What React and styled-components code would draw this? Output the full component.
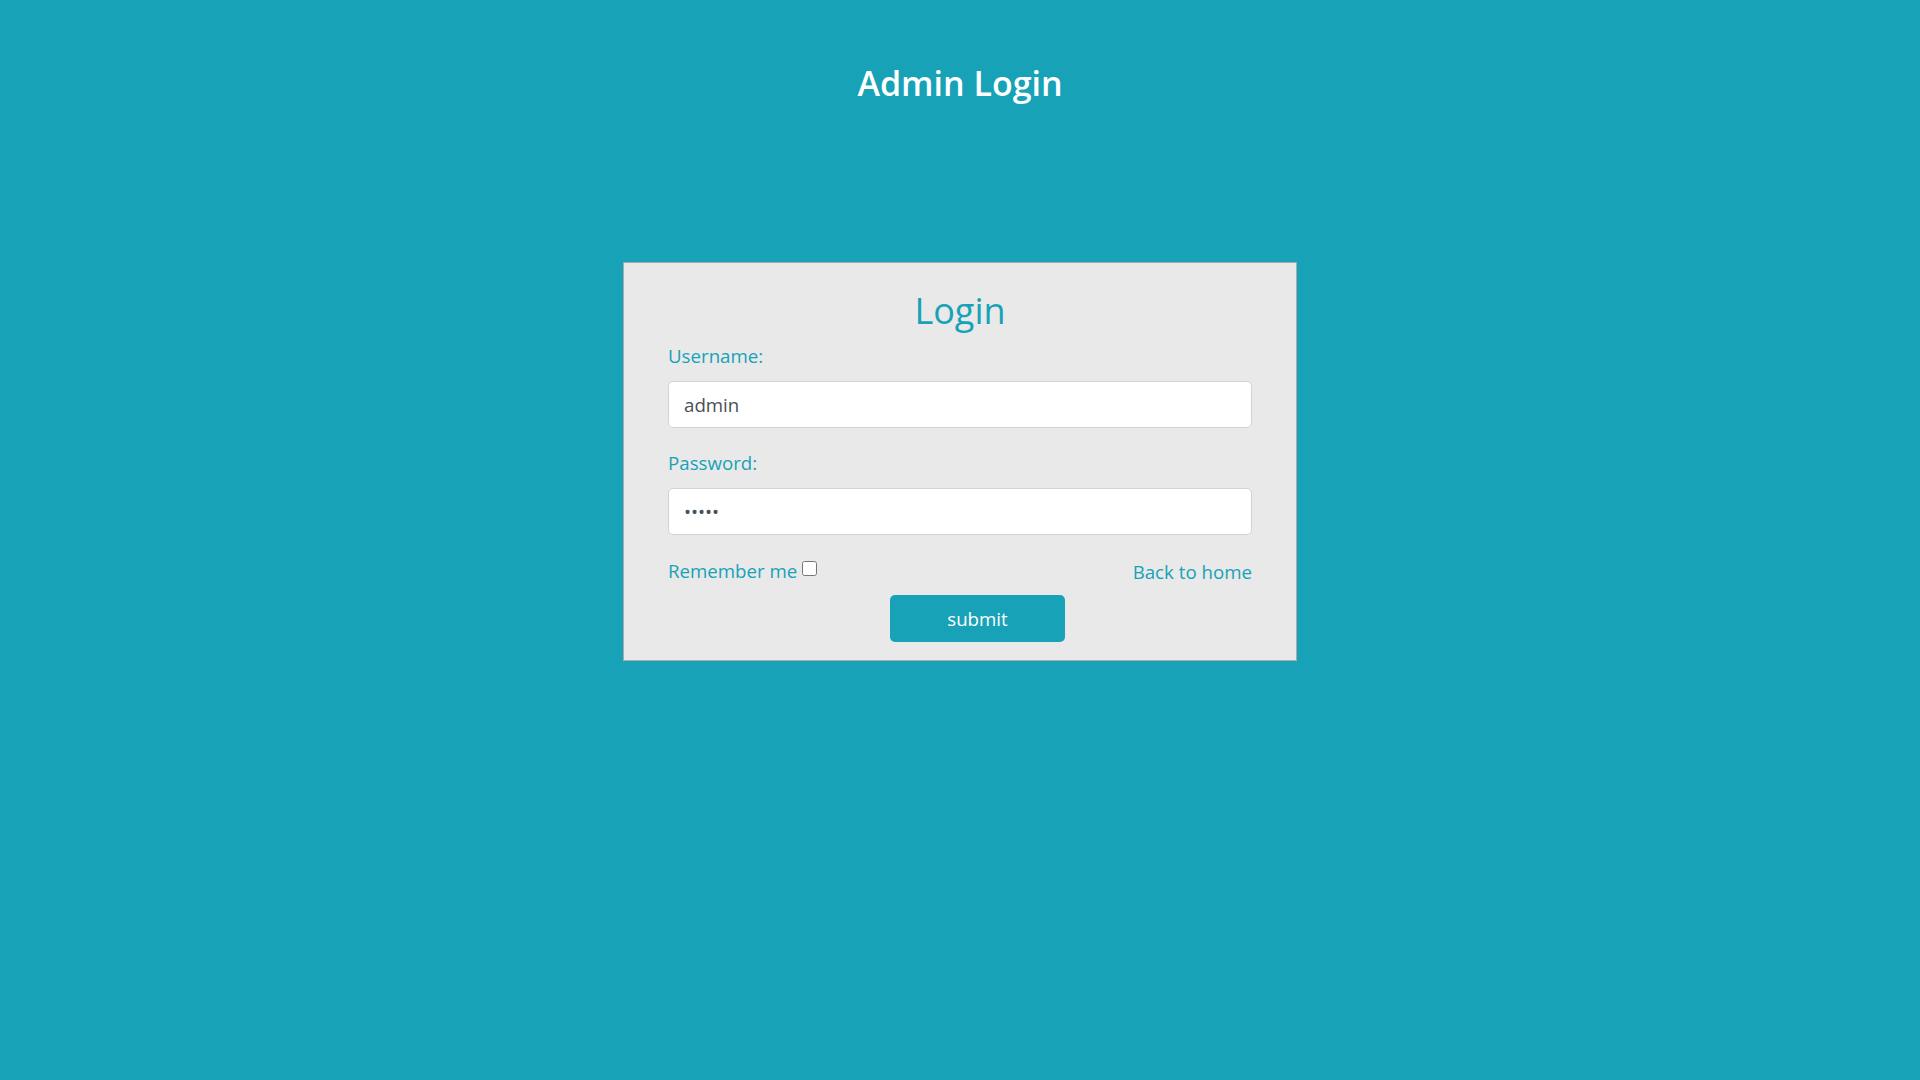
import React from "react";
import styled, { createGlobalStyle } from "styled-components";

const GlobalStyle = createGlobalStyle`
  html, body {
    margin: 0;
    padding: 0;
    background-color: #17a2b8;
    font-family: "Open Sans", "Noto Sans", sans-serif;
  }
  * {
    box-sizing: border-box;
  }
`;

const App = () => {
  return (
    <Page>
      <GlobalStyle />
      <Title>Admin Login</Title>
      <Card>
        <Heading>Login</Heading>
        <Group>
          <Label htmlFor="username">Username:</Label>
          <Input id="username" type="text" defaultValue="admin" />
        </Group>
        <Group>
          <Label htmlFor="password">Password:</Label>
          <Input id="password" type="password" defaultValue="admin" />
        </Group>
        <OptionsRow>
          <Remember>
            Remember me <Checkbox type="checkbox" />
          </Remember>
          <HomeLink href="#">Back to home</HomeLink>
        </OptionsRow>
        <ButtonRow>
          <SubmitButton type="submit">submit</SubmitButton>
        </ButtonRow>
      </Card>
    </Page>
  );
};

const Page = styled.div`
  width: 100%;
  min-height: 100vh;
  display: flex;
  flex-direction: column;
  align-items: center;
  padding-top: 62px;
`;

const Title = styled.h1`
  margin: 0;
  color: white;
  font-size: 34px;
  line-height: 42px;
  font-weight: 600;
`;

const Card = styled.div`
  width: 674px;
  margin-top: 158px;
  background-color: #e9e9e9;
  border: 1px solid #a9a9a9;
  padding: 26px 44px 18px;
`;

const Heading = styled.h2`
  margin: 0 0 10px;
  text-align: center;
  color: #17a2b8;
  font-size: 36px;
  line-height: 43px;
  font-weight: 500;
`;

const Group = styled.div`
  margin-bottom: 21px;
`;

const Label = styled.label`
  display: block;
  color: #17a2b8;
  font-size: 18.7px;
  line-height: 28.8px;
  margin-bottom: 10px;
`;

const Input = styled.input`
  display: block;
  width: 100%;
  height: 47px;
  padding: 0 15px;
  font-family: inherit;
  font-size: 18.7px;
  color: #495057;
  background-color: #fff;
  border: 1px solid #ced4da;
  border-radius: 5px;
  outline: none;
`;

const OptionsRow = styled.div`
  display: flex;
  justify-content: space-between;
  align-items: flex-end;
  height: 30px;
`;

const Remember = styled.label`
  display: flex;
  align-items: center;
  gap: 5px;
  color: #17a2b8;
  font-size: 18.7px;
  line-height: 28.8px;
`;

const Checkbox = styled.input`
  width: 15px;
  height: 15px;
  margin: 0 0 6px;
`;

const HomeLink = styled.a`
  color: #17a2b8;
  font-size: 18.7px;
  line-height: 28.8px;
  text-decoration: none;
  margin-bottom: -1px;
`;

const ButtonRow = styled.div`
  display: flex;
  justify-content: center;
  padding-left: 35px;
  margin-top: 9px;
`;

const SubmitButton = styled.button`
  width: 175px;
  height: 47px;
  background-color: #17a2b8;
  color: #fff;
  border: none;
  border-radius: 5px;
  font-family: inherit;
  font-size: 18.7px;
  cursor: pointer;
`;

export default App;
